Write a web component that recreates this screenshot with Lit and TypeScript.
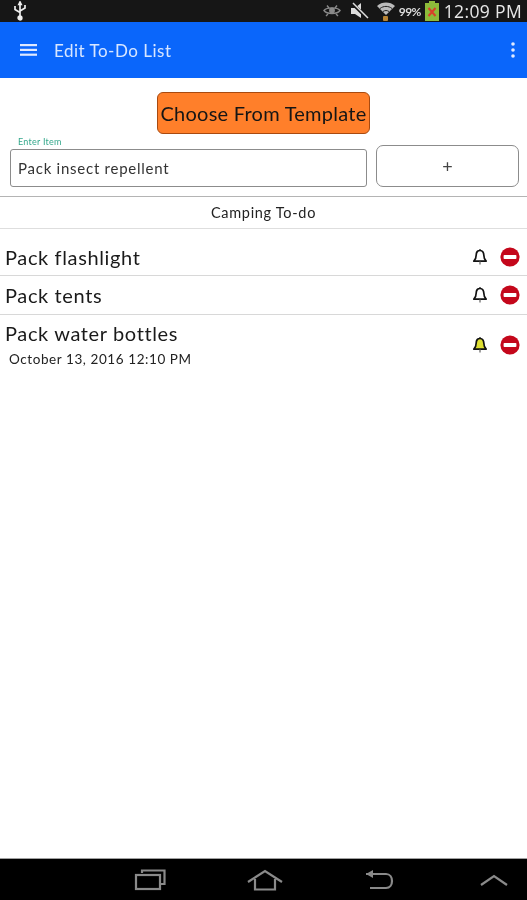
import { LitElement, html, css } from "lit";
import { customElement } from "lit/decorators.js";

const bell = (fill: string) => html`<svg class="bell" viewBox="0 0 16 18" width="16" height="18">
  <path d="M8 1.200v1.300M8 2.500c-2.800 0-3.800 2.200-3.800 4.600 0 2.800-.8 4.600-2.400 6h12.400c-1.600-1.400-2.400-3.200-2.400-6 0-2.400-1-4.600-3.800-4.600z" fill="${fill}" stroke="#111" stroke-width="1.700" stroke-linejoin="round"/>
  <path d="M8 13.500v3" stroke="#777" stroke-width="1.400"/>
</svg>`;

const minus = html`<svg class="del" viewBox="0 0 20 20" width="20" height="20">
  <circle cx="10" cy="10" r="9.600" fill="#c4071b"/>
  <rect x="3.600" y="8" width="12.800" height="4" rx="0.800" fill="#fff"/>
</svg>`;

const items = [
  { name: "Pack flashlight", fill: "#fff" },
  { name: "Pack tents", fill: "#fff" },
  { name: "Pack water bottles", date: "October 13, 2016 12:10 PM", fill: "#dfe033" },
];

@customElement("app-root")
export class AppRoot extends LitElement {
  static styles = css`
    :host { display: flex; flex-direction: column; width: 527px; height: 900px; background: #fff; font-family: "Lato", "Open Sans", sans-serif; color: #111; overflow: hidden; filter: blur(0.45px); }
    .status { height: 22px; background: #161616; display: flex; align-items: center; padding: 0 5px 0 13px; color: #e4e4e4; flex: none; }
    .status .spacer { flex: 1; }
    .status svg { display: block; flex: none; }
    .status .mute { margin-left: 9px; }
    .status .wifi { margin-left: 6px; }
    .pct { font-size: 12px; letter-spacing: -0.6px; margin: 0 4px 0 3px; color: #ddd; font-weight: 700; }
    .clock { font-size: 17.500px; letter-spacing: 0.350px; margin-left: 5px; color: #e8e8e8; line-height: 22px; font-family: "Open Sans", sans-serif; white-space: nowrap; }
    .toolbar { height: 56px; background: #0a66fb; display: flex; align-items: center; padding: 0 12px 0 20px; color: #d8e6ff; flex: none; }
    .toolbar .title { font-size: 17px; margin-left: 16px; letter-spacing: 0.500px; flex: 1; }
    .template-row { display: flex; justify-content: center; padding: 14px 0 0 0; flex: none; }
    .template { width: 213px; height: 42px; box-sizing: border-box; background: #ff7f2a; border: 1px solid #a84a10; border-radius: 6px; font: inherit; font-size: 20px; letter-spacing: 0.250px; color: #151515; padding: 0; white-space: nowrap; }
    .entry { display: flex; gap: 9px; padding: 0 8px 0 10px; margin-top: 1px; flex: none; }
    .field { width: 357px; flex: none; display: flex; flex-direction: column; }
    .field label { font-size: 9px; color: #35a88c; margin-left: 8px; height: 14px; line-height: 13px; letter-spacing: 0.250px; }
    .field .input { height: 38px; box-sizing: border-box; border: 1px solid #8c8c8c; border-radius: 3px; display: flex; align-items: center; padding-left: 7px; font-size: 15px; color: #333; letter-spacing: 0.750px; }
    .add { flex: 1; height: 42px; margin-top: 10px; box-sizing: border-box; background: #fff; border: 1px solid #8c8c8c; border-radius: 7px; font: inherit; font-size: 18px; color: #444; padding: 0; }
    .list-title { margin-top: 9px; height: 33px; box-sizing: border-box; border-top: 1px solid #b4b4b4; border-bottom: 1px solid #dedede; text-align: center; font-size: 14.500px; line-height: 32px; letter-spacing: 0.700px; color: #222; flex: none; }
    .list { padding-top: 9px; }
    .row { display: flex; align-items: flex-start; padding: 0 7px 0 5px; border-bottom: 1px solid #d8d8d8; height: 38px; box-sizing: border-box; }
    .row + .row { height: 39px; }
    .row.last { border-bottom: none; height: 62px; }
    .body { flex: 1; }
    .name { font-size: 20px; line-height: 38px; letter-spacing: 0.630px; color: #1a1a1a; }
    .last .name { line-height: 36px; }
    .date { font-size: 13.500px; line-height: 14px; margin: 1px 0 0 4px; letter-spacing: 0.580px; color: #222; }
    .acts { display: flex; align-items: center; gap: 12px; height: 38px; }
    .last .acts { height: 60px; }
    .bell, .del { display: block; flex: none; }
    .spacer-main { flex: 1; }
    .nav { height: 42px; background: #000; border-top: 1px solid #a0a0a0; box-sizing: border-box; display: flex; align-items: center; flex: none; padding: 0 0 0 134px; }
    .nav svg { display: block; flex: none; }
    .nav .home { margin-left: 81px; }
    .nav .back { margin-left: 82px; }
    .nav .up { margin-left: 86px; }
  `;

  render() {
    return html`
      <div class="status">
        <svg width="14" height="20" viewBox="0 0 14 20" fill="none" stroke="#eee" stroke-width="1.700"><path d="M7 2v15M2 5v3.500l5 3M12 4v3l-5 3"/><circle cx="7" cy="17" r="1.800" fill="#eee"/><path d="M5.800 3.500 7 1l1.200 2.500z" fill="#eee"/></svg>
        <div class="spacer"></div>
        <svg width="18" height="14" viewBox="0 0 18 14" fill="none" stroke="#8a8a8a" stroke-width="1.400"><path d="M1 6.500C4 3 14 3 17 6.500 14 10.500 4 10.500 1 6.500z"/><circle cx="9" cy="6.500" r="2.200" fill="#8a8a8a"/><path d="M4 1.500 6 4M14 1.500 12 4M3 12l2-2M15 12l-2-2"/></svg>
        <svg class="mute" width="20" height="18" viewBox="0 0 20 18"><path d="M1 6h4l6-5v15l-6-4H1z" fill="#ddd"/><path d="M2 1l16 16" stroke="#161616" stroke-width="3.200"/><path d="M3 1l15 15" stroke="#ddd" stroke-width="1.500"/></svg>
        <svg class="wifi" width="20" height="20" viewBox="0 0 20 20" fill="none"><path d="M1 5c5-4.600 13-4.600 18 0l-9 9z" fill="#bbb"/><path d="M4 7.500c3.500-2.800 8.500-2.800 12 0" stroke="#222" stroke-width="1"/><path d="M7 10.500c2-1.300 4-1.300 6 0" stroke="#222" stroke-width="1"/><rect x="7" y="15" width="5" height="5" rx="1" fill="#b78435"/></svg>
        <span class="pct">99%</span>
        <svg width="14" height="20" viewBox="0 0 14 20"><rect x="4" y="0" width="6" height="2" fill="#8dbb3a"/><rect x="0" y="2" width="14" height="18" fill="#8dbb3a"/><path d="M3.500 7l7 8M10.500 7l-7 8" stroke="#d8402a" stroke-width="2"/></svg>
        <span class="clock">12:09 PM</span>
      </div>
      <div class="toolbar">
        <svg width="18" height="14" viewBox="0 0 18 14" fill="#dfe9ff"><rect y="1" width="17" height="2.200"/><rect y="5.800" width="17" height="2.200"/><rect y="10.600" width="17" height="2.200"/></svg>
        <span class="title">Edit To-Do List</span>
        <svg width="4" height="16" viewBox="0 0 4 16" fill="#dfe9ff"><circle cx="2" cy="2" r="1.800"/><circle cx="2" cy="8" r="1.800"/><circle cx="2" cy="14" r="1.800"/></svg>
      </div>
      <div class="template-row"><button class="template">Choose From Template</button></div>
      <div class="entry">
        <div class="field">
          <label>Enter Item</label>
          <div class="input">Pack insect repellent</div>
        </div>
        <button class="add">+</button>
      </div>
      <div class="list-title">Camping To-do</div>
      <div class="list">
        ${items.map((it, i) => html`
          <div class="row ${i === items.length - 1 ? "last" : ""}">
            <div class="body">
              <div class="name">${it.name}</div>
              ${it.date ? html`<div class="date">${it.date}</div>` : ""}
            </div>
            <div class="acts">${bell(it.fill)}${minus}</div>
          </div>`)}
      </div>
      <div class="spacer-main"></div>
      <div class="nav">
        <svg width="32" height="22" viewBox="0 0 32 22" fill="none" stroke="#8a8a8a" stroke-width="2.200"><path d="M8 4V1.500h22.500V15H27"/><rect x="2" y="6" width="24" height="14"/></svg>
        <svg class="home" width="36" height="22" viewBox="0 0 36 22" fill="none" stroke="#8a8a8a" stroke-width="2.200"><path d="M1 13 18 2l17 11M8 10v10.500h20V10"/></svg>
        <svg class="back" width="29" height="22" viewBox="0 0 29 22" fill="none" stroke="#8a8a8a" stroke-width="2.200"><path d="M1 5h20c8 0 8 14 0 14H5"/><path d="M8 1v8L1 5z" fill="#8a8a8a" stroke="none"/></svg>
        <svg class="up" width="28" height="14" viewBox="0 0 28 14" fill="none" stroke="#8a8a8a" stroke-width="2.200"><path d="M1 12 14 3l13 9"/></svg>
      </div>
    `;
  }
}
